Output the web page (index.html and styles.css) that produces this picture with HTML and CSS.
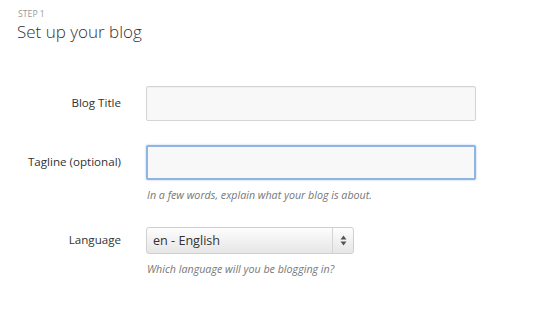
FILE: index.html
```html
<!DOCTYPE html>
<html>
<head>
<meta charset="utf-8">
<link rel="stylesheet" href="styles.css">
</head>
<body>
<div class="page">
  <div class="step">STEP 1</div>
  <h1 class="title">Set up your blog</h1>
  <form class="form">
    <label class="label" for="t">Blog Title</label>
    <div class="field"><input class="input" id="t" type="text"></div>

    <label class="label" for="g">Tagline (optional)</label>
    <div class="field">
      <input class="input focus" id="g" type="text">
      <p class="help">In a few words, explain what your blog is about.</p>
    </div>

    <label class="label label-sel" for="l">Language</label>
    <div class="field">
      <div class="select">
        <span class="sel-text">en - English</span>
        <span class="sel-arrow">
          <svg width="7" height="11" viewBox="0 0 7 11"><path d="M3.5 0.5 L6.5 4.5 H0.5 Z" fill="#555"/><path d="M3.5 10.5 L6.5 6.5 H0.5 Z" fill="#555"/></svg>
        </span>
      </div>
      <p class="help">Which language will you be blogging in?</p>
    </div>
  </form>
</div>
</body>
</html>
```
FILE: styles.css
```css
html, body {
  margin: 0;
  padding: 0;
  background: #fff;
}
body {
  font-family: "Open Sans", "Liberation Sans", sans-serif;
  color: #333;
}
.page {
  padding: 9px 0 0 18px;
}
.step {
  font-size: 8.7px;
  line-height: 10px;
  color: #999;
}
.title {
  margin: 2px 0 0 -1px;
  font-size: 17px;
  line-height: 22px;
  font-weight: 300;
  color: #333;
}
.form {
  display: grid;
  grid-template-columns: 103px 330px;
  column-gap: 25px;
  row-gap: 24px;
  margin-top: 43px;
  align-items: start;
}
.label {
  font-size: 11.6px;
  line-height: 34px;
  text-align: right;
  color: #333;
}
.label-sel {
  line-height: 26px;
}
.field {
  display: flex;
  flex-direction: column;
}
.input {
  box-sizing: border-box;
  width: 330px;
  height: 35px;
  margin: 0;
  border: 1px solid #d4d4d4;
  border-radius: 2px;
  background: #f8f8f8;
  box-shadow: inset 0 1px 1px rgba(0,0,0,0.04);
  outline: none;
}
.focus {
  border: 2px solid #8fb5e0;
  box-shadow: 0 0 2px rgba(100,150,220,0.6);
}
.help {
  margin: 8px 0 1px 1px;
  font-size: 10.7px;
  line-height: 14px;
  font-style: italic;
  color: #777;
}
.select {
  box-sizing: border-box;
  width: 208px;
  height: 27px;
  border: 1px solid #d0d0d0;
  border-radius: 3px;
  background: linear-gradient(#fdfdfd, #e6e6e6);
  display: flex;
  align-items: center;
}
.sel-text {
  flex: 1;
  padding-left: 6px;
  font-size: 12.6px;
  color: #333;
}
.sel-arrow {
  width: 20px;
  height: 100%;
  border-left: 1px solid #d4d4d4;
  display: flex;
  align-items: center;
  justify-content: center;
}
.sel-arrow svg {
  display: block;
}
```
